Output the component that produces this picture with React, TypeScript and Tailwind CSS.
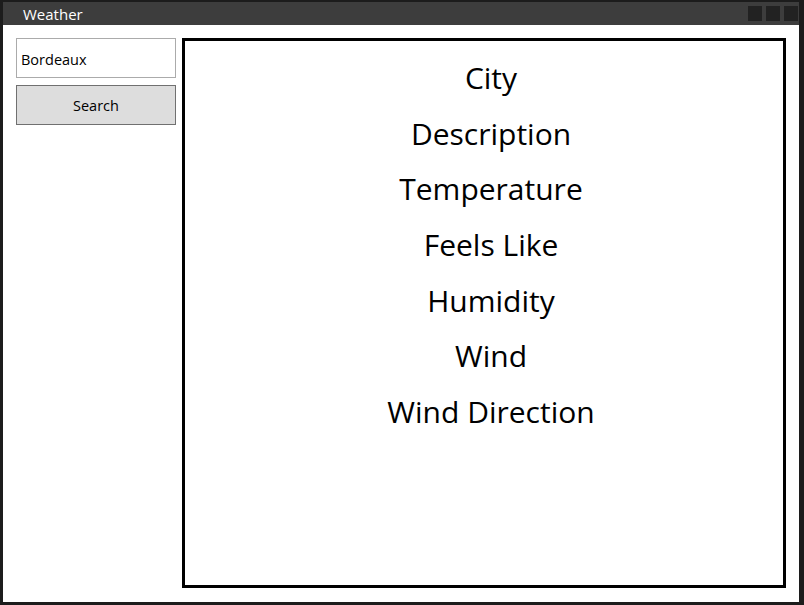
import React from "react";

const fields = ["City", "Description", "Temperature", "Feels Like", "Humidity", "Wind", "Wind Direction"];

export default function App() {
  return (
    <div
      className="w-[804px] h-[605px] bg-[#1c1c1c] pt-[2px] pl-[3px] pr-[5px] pb-[3px] flex flex-col"
      style={{ fontFamily: '"Open Sans", "Noto Sans", sans-serif' }}
    >
      <div className="h-[23px] bg-[#3d3d3d] flex items-center justify-between pl-[20px] pr-[1px]">
        <span className="text-white text-[15px] leading-none pt-[2px]">Weather</span>
        <div className="flex gap-[4px]">
          <div className="w-[14px] h-[15px] bg-[#222222]" />
          <div className="w-[14px] h-[15px] bg-[#222222]" />
          <div className="w-[14px] h-[15px] bg-[#222222]" />
        </div>
      </div>
      <div className="flex-1 bg-white flex pt-[13px] pl-[13px] pr-[13px] pb-[14px] gap-[6px]">
        <div className="w-[160px] flex flex-col gap-[7px]">
          <div className="h-[40px] border border-[#ababab] flex items-center px-[4px] pt-[3px] text-[14.5px] text-black">
            Bordeaux
          </div>
          <div className="h-[40px] border border-[#707070] bg-[#dddddd] flex items-center justify-center pt-[2px] text-[14.5px] text-black">
            Search
          </div>
        </div>
        <div className="flex-1 border-[3px] border-black flex flex-col items-center pl-[14px] pt-[17px] gap-[15px]">
          {fields.map((f) => (
            <div key={f} className="text-[30px] leading-[40.67px] text-black">
              {f}
            </div>
          ))}
        </div>
      </div>
    </div>
  );
}
